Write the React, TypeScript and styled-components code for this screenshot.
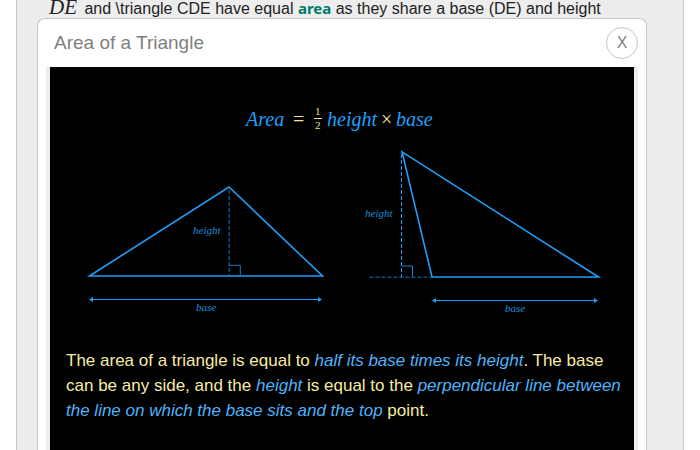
import React from "react";
import styled, { createGlobalStyle } from "styled-components";

const GlobalStyle = createGlobalStyle`
  * { box-sizing: border-box; }
  html, body { margin: 0; height: 100%; overflow: hidden; background: #fff; }
  body { font-family: "Liberation Sans", Arial, sans-serif; color: #222; }
`;

const Column = styled.main`
  position: relative;
  height: 100vh;
  margin: 0 16px;
  background: #ededed;
  border: solid #c8c8c8;
  border-width: 0 1px;
`;

const Prose = styled.p`
  margin: 0;
  padding: 0 32px;
  line-height: 17px;
  font-size: 16px;
  white-space: nowrap;
`;

const MathText = styled.span`
  margin-right: 3px;
  font: italic 21px/12px "Liberation Serif", "Times New Roman", serif;
`;

const Term = styled.a`
  font-family: "Noto Sans", sans-serif;
  font-size: 15px;
  line-height: 12px;
  font-weight: 700;
  color: #007a6c;
  text-decoration: none;
`;

const Dialog = styled.section`
  position: absolute;
  top: 18px;
  bottom: 0;
  left: 20px;
  right: 36px;
  display: flex;
  flex-direction: column;
  padding: 0 8px;
  background: #fff;
  border: 1px solid #c8c8c8;
  border-bottom: 0;
  border-radius: 8px 8px 0 0;
`;

const Header = styled.header`
  display: flex;
  align-items: center;
  justify-content: space-between;
  flex: none;
  height: 48px;
  padding-left: 8px;
`;

const Title = styled.h2`
  margin: 0;
  font-size: 19px;
  font-weight: 400;
  color: #7f7f7f;
`;

const CloseButton = styled.button`
  width: 32px;
  height: 32px;
  padding: 0;
  border: 1px solid #c8c8c8;
  border-radius: 50%;
  background: #fff;
  color: #7f7f7f;
  font: 16px "Liberation Sans", Arial, sans-serif;
`;

const Content = styled.div`
  flex: 1;
  min-height: 0;
  overflow: hidden;
  background: #000;
  border: solid #ededed;
  border-width: 0 4px;
`;

const Figure = styled.svg`
  display: block;
  width: 100%;
`;

const FormulaText = styled.text<{ $plain?: boolean; $small?: boolean }>`
  font-family: "Liberation Serif", "Times New Roman", serif;
  font-style: ${(p) => (p.$plain ? "normal" : "italic")};
  font-size: ${(p) => (p.$small ? 11 : 20)}px;
  fill: ${(p) => (p.$plain ? "#f4e59a" : "#1ca0fb")};
`;

const Label = styled.text`
  font: italic 11px "Liberation Serif", "Times New Roman", serif;
  fill: #1b8edb;
`;

const Explanation = styled.p`
  margin: 0;
  padding: 16px 12px 16px 16px;
  font-size: 17px;
  line-height: 25px;
  color: #f7eba6;
`;

const Em = styled.em`
  color: #4db3fb;
`;

function Dimension({ from, to, y }: { from: number; to: number; y: number }) {
  return (
    <g stroke="#1ca0fb" fill="#1ca0fb">
      <path d={`M${from + 2} ${y}H${to - 2}`} />
      <path
        stroke="none"
        d={`M${from} ${y}l4-2.5v5zM${to} ${y}l-4-2.5v5z`}
      />
    </g>
  );
}

function TriangleFigure() {
  return (
    <Figure viewBox="50 67 584 265" role="img" aria-label="Area equals one half height times base">
      <FormulaText x="246" y="126">Area</FormulaText>
      <FormulaText $plain x="293" y="126">=</FormulaText>
      <FormulaText $plain $small x="315" y="115">1</FormulaText>
      <path d="M314 118.500h8" stroke="#f4e59a" />
      <FormulaText $plain $small x="315" y="129">2</FormulaText>
      <FormulaText x="327" y="126">height</FormulaText>
      <FormulaText $plain x="381" y="126">×</FormulaText>
      <FormulaText x="396" y="126">base</FormulaText>

      <g fill="none" stroke="#1ca0fb">
        <path strokeWidth="1.600" d="M89.500 276L229 187L322.500 276Z" />
        <path strokeDasharray="4 2" stroke="#1476bb" d="M229.200 190V276" />
        <path stroke="#1476bb" d="M229 265.300H240.300V276" />
        <path strokeWidth="1.600" d="M402 151.800L598.500 277H432Z" />
        <path strokeDasharray="4 2" d="M401.500 154V277" />
        <path strokeDasharray="4 2" stroke="#1476bb" d="M369.500 277.200H432" />
        <path stroke="#1482cd" d="M402 266H412.500V277" />
      </g>
      <Dimension from={89} to={322} y={299.5} />
      <Dimension from={432} to={598} y={300.5} />
      <Label x="193" y="234">height</Label>
      <Label x="196" y="311">base</Label>
      <Label x="365" y="217">height</Label>
      <Label x="505" y="312">base</Label>
    </Figure>
  );
}

export default function App() {
  return (
    <>
      <GlobalStyle />
      <Column>
        <Prose>
          <MathText>DE</MathText> and \triangle CDE have equal <Term href="#area">area</Term> as
          they share a base (DE) and height
        </Prose>
        <Dialog role="dialog" aria-labelledby="dialog-title">
          <Header>
            <Title id="dialog-title">Area of a Triangle</Title>
            <CloseButton type="button" aria-label="Close">X</CloseButton>
          </Header>
          <Content>
            <TriangleFigure />
            <Explanation>
              The area of a triangle is equal to <Em>half its base times its height</Em>. The base
              can be any side, and the <Em>height</Em> is equal to the{" "}
              <Em>perpendicular line between the line on which the base sits and the top</Em> point.
            </Explanation>
          </Content>
        </Dialog>
      </Column>
    </>
  );
}
